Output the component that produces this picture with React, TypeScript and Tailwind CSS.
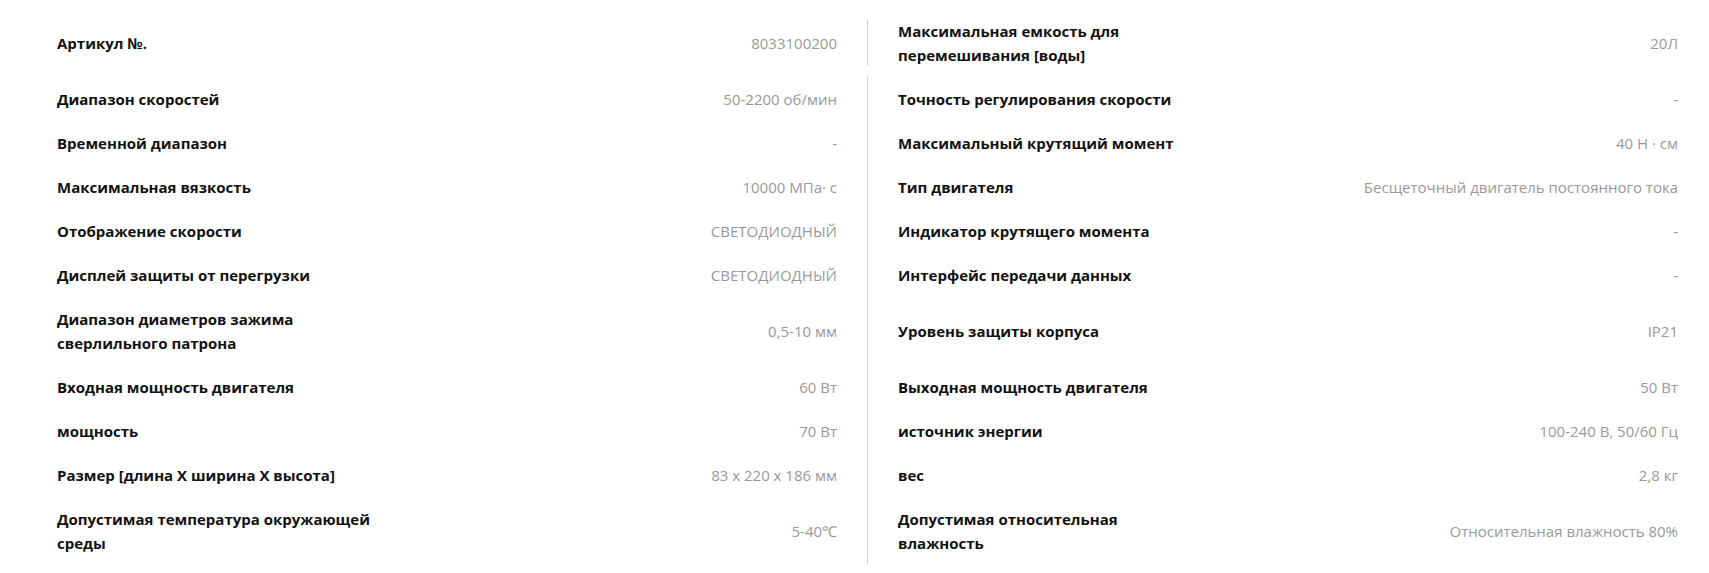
import React from "react";

type Spec = { label: string; value: string };

const rows: [Spec, Spec][] = [
  [
    { label: "Артикул №.", value: "8033100200" },
    { label: "Максимальная емкость для перемешивания [воды]", value: "20Л" },
  ],
  [
    { label: "Диапазон скоростей", value: "50-2200 об/мин" },
    { label: "Точность регулирования скорости", value: "-" },
  ],
  [
    { label: "Временной диапазон", value: "-" },
    { label: "Максимальный крутящий момент", value: "40 Н · см" },
  ],
  [
    { label: "Максимальная вязкость", value: "10000 МПа· с" },
    { label: "Тип двигателя", value: "Бесщеточный двигатель постоянного тока" },
  ],
  [
    { label: "Отображение скорости", value: "СВЕТОДИОДНЫЙ" },
    { label: "Индикатор крутящего момента", value: "-" },
  ],
  [
    { label: "Дисплей защиты от перегрузки", value: "СВЕТОДИОДНЫЙ" },
    { label: "Интерфейс передачи данных", value: "-" },
  ],
  [
    { label: "Диапазон диаметров зажима сверлильного патрона", value: "0,5-10 мм" },
    { label: "Уровень защиты корпуса", value: "IP21" },
  ],
  [
    { label: "Входная мощность двигателя", value: "60 Вт" },
    { label: "Выходная мощность двигателя", value: "50 Вт" },
  ],
  [
    { label: "мощность", value: "70 Вт" },
    { label: "источник энергии", value: "100-240 В, 50/60 Гц" },
  ],
  [
    { label: "Размер [длина X ширина X высота]", value: "83 x 220 x 186 мм" },
    { label: "вес", value: "2,8 кг" },
  ],
  [
    { label: "Допустимая температура окружающей среды", value: "5-40℃" },
    { label: "Допустимая относительная влажность", value: "Относительная влажность 80%" },
  ],
];

function Cell({ spec, first, right }: { spec: Spec; first: boolean; right?: boolean }) {
  return (
    <div className={`flex-1 flex items-center justify-between gap-6 ${first ? "" : "py-[10px]"}`}>
      <span
        className={`font-bold text-[15px] leading-[24px] text-[#111] ${
          right ? "max-w-[285px]" : "max-w-[325px]"
        }`}
      >
        {spec.label}
      </span>
      <span className="text-right font-normal text-[15px] leading-[24px] text-[#999]">
        {spec.value}
      </span>
    </div>
  );
}

export default function App() {
  return (
    <div
      className="w-full min-h-[573px] bg-white pl-[57px] pr-[31px] pt-[19px]"
      style={{ fontFamily: '"Open Sans", "Noto Sans", sans-serif' }}
    >
      {rows.map(([left, right], i) => (
        <div key={i} className={`flex gap-x-[30px] ${i === 0 ? "mb-[10px]" : ""}`}>
          <Cell spec={left} first={i === 0} />
          <div className={`w-px shrink-0 bg-[#d0d0d0] ${i === 0 ? "my-[1px]" : ""}`} />
          <Cell spec={right} first={i === 0} right />
        </div>
      ))}
    </div>
  );
}
